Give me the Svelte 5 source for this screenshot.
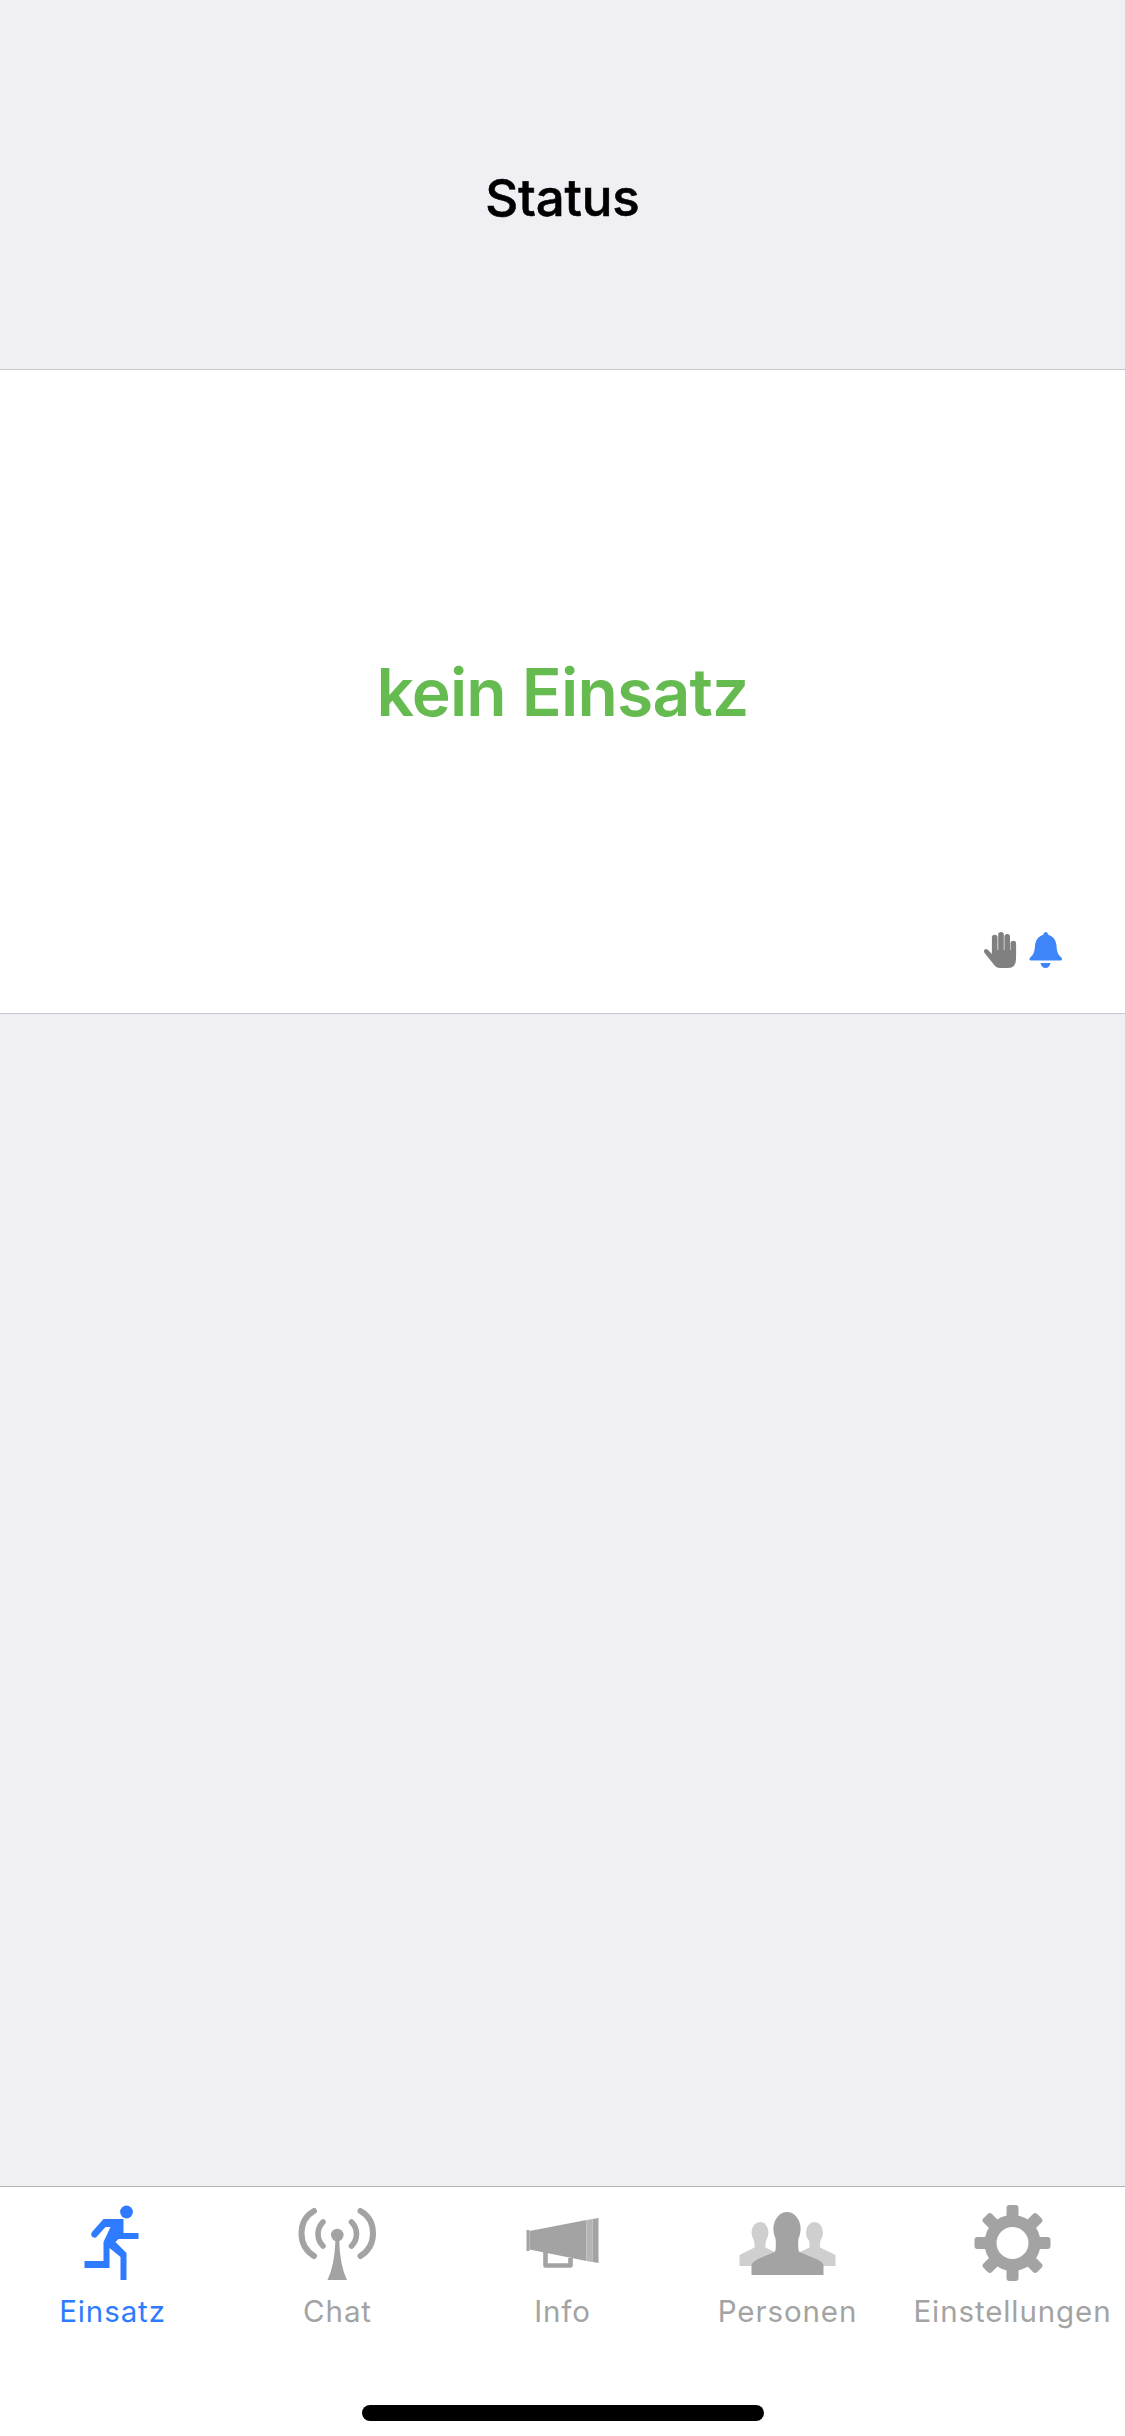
<script>
  const teeth = [0, 45, 90, 135, 180, 225, 270, 315];
</script>

<main class="page">
  <header class="header">
    <h1>Status</h1>
  </header>

  <section class="card">
    <div class="state">kein Einsatz</div>
    <div class="flags">
      <svg class="flag" viewBox="22 20 36 40" aria-hidden="true">
        <g fill="none" stroke="#808080" stroke-width="5.6" stroke-linecap="round">
          <path d="M34.700 46V27.500" />
          <path d="M41 46V24.800" />
          <path d="M47.200 46V26.800" />
          <path d="M53.300 46V33.500" />
        </g>
        <path fill="#808080" d="M32 38L32 44L27.500 39.500Q25 38 24 40.500Q23.600 42 25 43.500L33 53.500Q36 58 40 58H48Q56 58 56 49V40H32Z" />
      </svg>
      <svg class="flag" viewBox="68 20 36 40" aria-hidden="true">
        <path fill="#3f85fa" d="M85.500 22c1.600 0 2.600 1.200 2.600 2.800c5.500 1.500 8 6 8.400 11c.4 6 1.500 9 5 12c1.200 1.200 .6 2.700-1 2.700H71c-1.600 0-2.200-1.500-1-2.700c3.500-3 4.600-6 5-12c.4-5 2.900-9.500 8.400-11c0-1.600 1-2.800 2.600-2.800Z" />
        <path fill="#3f85fa" d="M80.500 53h10c-.5 3-2.600 5-5 5s-4.500-2-5-5Z" />
      </svg>
    </div>
  </section>

  <div class="spacer"></div>

  <nav class="tabbar">
    <div class="tabs">
      <div class="tab active">
        <svg viewBox="-2.500 5 110 100" aria-hidden="true">
          <circle cx="66" cy="22" r="6.400" fill="#2f7bff" />
          <path fill="#2f7bff" d="M43 29H63V43H78V49H58L55 52L66 63V90H60V67L49 58V78H24V71H43V52L50 37H45L35.500 47.500Q33 48.500 31 46Q30 44 31.500 42Z" />
        </svg>
        <span>Einsatz</span>
      </div>
      <div class="tab">
        <svg viewBox="2.500 5 110 100" aria-hidden="true">
          <g fill="none" stroke="#a3a3a3" stroke-linecap="round">
            <path stroke-width="6" d="M33.500 21Q21 28 21 43.500Q21 58 33.500 66" />
            <path stroke-width="6" d="M80 21Q92.500 28 92.500 43.500Q92.500 58 80 66" />
            <path stroke-width="5.600" d="M42.500 32Q37.500 37 37.500 44Q37.500 51 42.500 56" />
            <path stroke-width="5.600" d="M71 32Q76 37 76 44Q76 51 71 56" />
          </g>
          <circle cx="56.800" cy="45" r="6.300" fill="#a3a3a3" />
          <path fill="#a3a3a3" d="M55 50H58.600Q59.500 76 66.500 90H47Q54 76 55 50Z" />
        </svg>
        <span>Chat</span>
      </div>
      <div class="tab">
        <svg viewBox="-2.500 -5 110 100" aria-hidden="true">
          <rect x="16" y="30" width="3" height="21" fill="#a3a3a3" />
          <path fill="#a3a3a3" d="M19 31L76 20V61L19 49.500Z" />
          <path fill="#b5b5b5" d="M76 20L82 19V62L76 61Z" />
          <path fill="#a3a3a3" d="M82 19L88 18V63L82 62Z" />
          <path fill="none" stroke="#a3a3a3" stroke-width="4.600" stroke-linejoin="round" d="M35 50V65.500H60V58" />
        </svg>
        <span>Info</span>
      </div>
      <div class="tab">
        <svg viewBox="7.500 -5 110 100" aria-hidden="true">
          <g fill="#cfcfcf">
            <ellipse cx="34.500" cy="32.500" rx="8.500" ry="10.500" />
            <path d="M14 66V55L29 47.500Q29.500 46 28 38H41Q39.500 46 40 47.500L56 55V66Z" />
            <ellipse cx="89" cy="32.500" rx="8.500" ry="10.500" />
            <path d="M68 66V55L84 47.500Q84.500 46 83 38H95.500Q94 46 94.500 47.500L110 55V66Z" />
          </g>
          <ellipse cx="61.500" cy="29" rx="13.600" ry="17" fill="#a3a3a3" />
          <path fill="#a3a3a3" d="M26 75V65Q27 61 36 57.500L49 52Q51 50 50 38H73Q72 50 74 52L87 57.500Q97 61 98 65V75Z" />
        </svg>
        <span>Personen</span>
      </div>
      <div class="tab">
        <svg viewBox="-2.500 0 110 100" aria-hidden="true">
          {#each teeth as angle}
            <rect x="46" y="10" width="12" height="20" rx="3" fill="#a3a3a3" transform="rotate({angle} 52 48)" />
          {/each}
          <circle cx="52" cy="48" r="22" fill="none" stroke="#a3a3a3" stroke-width="12" />
        </svg>
        <span>Einstellungen</span>
      </div>
    </div>
    <div class="home"></div>
  </nav>
</main>

<style>
  :global(body) {
    margin: 0;
    background: #efeff4;
  }

  .page {
    display: flex;
    flex-direction: column;
    min-height: 100vh;
    font-family: Inter, "Noto Sans", sans-serif;
  }

  .header {
    box-sizing: border-box;
    height: 370px;
    padding-top: 167px;
    display: flex;
    justify-content: center;
    align-items: flex-start;
    background: #efeff4;
    border-bottom: 1px solid #c8c8cc;
  }

  h1 {
    margin: 0;
    font-size: 51px;
    line-height: 62px;
    font-weight: 500;
    letter-spacing: -0.1px;
    -webkit-text-stroke: 0.6px #000;
    color: #000;
  }

  .card {
    box-sizing: border-box;
    height: 644px;
    display: grid;
    grid-template-rows: 1fr auto 1fr;
    background: #fff;
    border-bottom: 1px solid #c8c8cc;
  }

  .state {
    grid-row: 2;
    text-align: center;
    font-size: 66px;
    line-height: 80px;
    font-weight: 600;
    letter-spacing: -0.8px;
    color: #66bb50;
  }

  .flags {
    grid-row: 3;
    align-self: end;
    display: flex;
    justify-content: flex-end;
    gap: 10px;
    padding: 0 61px 43px 0;
  }

  .flag {
    width: 36px;
    height: 40px;
  }

  .spacer {
    flex: 1;
    background: #efeff4;
  }

  .tabbar {
    box-sizing: border-box;
    height: 250px;
    background: #fff;
    border-top: 1px solid #b2b2b2;
    display: flex;
    flex-direction: column;
    align-items: center;
  }

  .tabs {
    display: grid;
    grid-template-columns: repeat(5, 225px);
    padding-top: 8px;
  }

  .tab {
    display: flex;
    flex-direction: column;
    align-items: center;
    color: #a3a3a3;
  }

  .tab.active {
    color: #2f7bff;
  }

  .tab svg {
    width: 110px;
    height: 100px;
  }

  .tab span {
    margin-top: -2px;
    font-size: 29.500px;
    line-height: 36px;
    letter-spacing: 0.9px;
    white-space: nowrap;
  }

  .home {
    width: 402px;
    height: 16px;
    margin-top: 76px;
    border-radius: 8px;
    background: #000;
  }
</style>
